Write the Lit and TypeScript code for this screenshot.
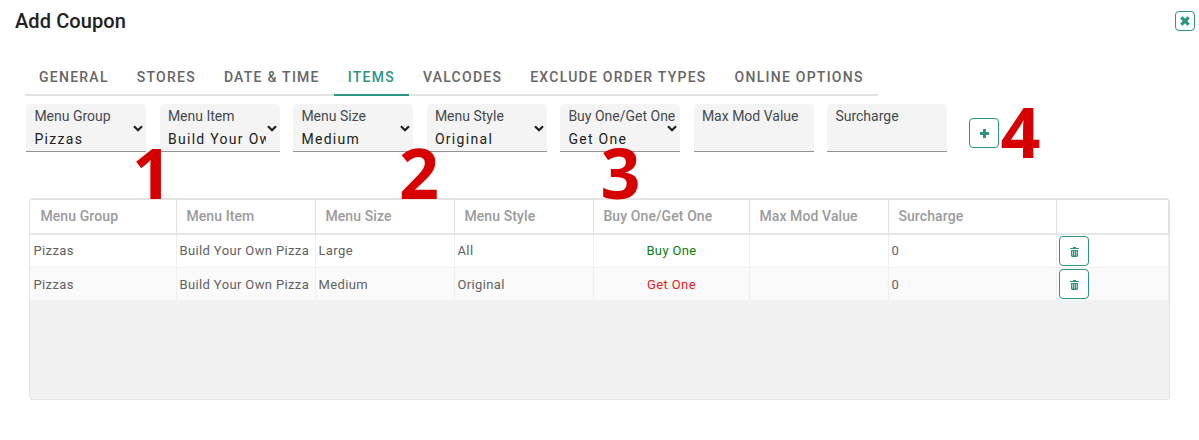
import { LitElement, html, css } from 'lit';
import { customElement, property } from 'lit/decorators.js';
import { classMap } from 'lit/directives/class-map.js';

const TABS = ['General', 'Stores', 'Date & Time', 'Items', 'Valcodes', 'Exclude Order Types', 'Online Options'];

const FIELDS = [
    { label: 'Menu Group', value: 'Pizzas', select: true },
    { label: 'Menu Item', value: 'Build Your Own Pizza', select: true },
    { label: 'Menu Size', value: 'Medium', select: true },
    { label: 'Menu Style', value: 'Original', select: true },
    { label: 'Buy One/Get One', value: 'Get One', select: true },
    { label: 'Max Mod Value', value: '', select: false },
    { label: 'Surcharge', value: '', select: false },
];

const ROWS = [
    { group: 'Pizzas', item: 'Build Your Own Pizza', size: 'Large', style: 'All', type: 'Buy One', mod: '', surcharge: '0' },
    { group: 'Pizzas', item: 'Build Your Own Pizza', size: 'Medium', style: 'Original', type: 'Get One', mod: '', surcharge: '0' },
];

@customElement('icon-button')
export class IconButton extends LitElement {
    @property() icon = 'plus';

    static styles = css`
    :host { display: block; width: 30px; height: 30px; }
    button {
      display: flex;
      align-items: center;
      justify-content: center;
      width: 100%;
      height: 100%;
      padding: 0;
      box-sizing: border-box;
      border: 1px solid #2d9482;
      border-radius: 4px;
      background: #fff;
      color: #2d9482;
    }
    svg { display: block; fill: currentColor; }
    .plus { margin-left: 1px; }
    .trash { margin: 2px 0 0 1px; }
  `;

    render() {
        return html`<button aria-label=${this.icon}>${this.renderIcon()}</button>`;
    }

    renderIcon() {
        if (this.icon === 'close') {
            return html`<svg width="10" height="10" viewBox="0 0 10 10"><path d="M2.4 .5 5 3.1 7.6 .5 9.5 2.4 6.9 5 9.5 7.6 7.6 9.5 5 6.9 2.4 9.5 .5 7.6 3.1 5 .5 2.4z" stroke="currentColor" stroke-width=".6" stroke-linejoin="round"/></svg>`;
        }
        if (this.icon === 'trash') {
            return html`<svg class="trash" width="9" height="10" viewBox="0 0 9 10"><path fill-rule="evenodd" d="M3 0h3v1h3v1H0V1h3zM1 3h7v6L7 10H2L1 9zM2.4 4v4.6h.6V4zM4.2 4v4.6h.6V4zM6 4v4.6h.6V4z"/></svg>`;
        }
        return html`<svg class="plus" width="9" height="9" viewBox="0 0 9 9"><path d="M3 0h3v3h3v3H6v3H3V6H0V3h3z"/></svg>`;
    }
}

@customElement('form-field')
export class FormField extends LitElement {
    @property() label = '';
    @property() value = '';
    @property({ type: Boolean }) select = false;

    static styles = css`
    :host {
      display: flex;
      align-items: center;
      box-sizing: border-box;
      position: relative;
      width: 120px;
      height: 48px;
      padding: 0 13.6px 0 8.4px;
      background: #f4f4f4;
      border-bottom: 1px solid #939393;
      border-radius: 4px 4px 0 0;
    }
    .text { flex: 1; min-width: 0; height: 47px; }
    .label {
      padding-top: 4px;
      font-size: 14px;
      line-height: 16px;
      color: #444a50;
      white-space: nowrap;
    }
    .value {
      padding-top: 6px;
      font-size: 14px;
      line-height: 18px;
      letter-spacing: 1.3px;
      color: #212121;
      white-space: nowrap;
      overflow: hidden;
    }
    /* sits over the end of long labels */
    .arrow { position: absolute; right: 3px; top: 21px; fill: none; stroke: #212121; stroke-width: 2.2; }
  `;

    render() {
        return html`
      <div class="text">
        <div class="label">${this.label}</div>
        <div class="value">${this.value}</div>
      </div>
      ${this.select
                ? html`<svg class="arrow" width="10" height="7" viewBox="0 0 10 7"><path d="M1 1.2 5 5.2 9 1.2"/></svg>`
                : ''}
    `;
    }
}

@customElement('items-table')
export class ItemsTable extends LitElement {
    static styles = css`
    :host {
      display: block;
      box-sizing: border-box;
      height: 202px;
      border: 1px solid #e3e3e3;
      border-top-width: 2px;
      border-radius: 4px;
      background: #f1f1f1;
      overflow: hidden;
    }
    .row {
      display: grid;
      grid-template-columns: 147px 139px 139px 139px 156px 139px 168px 1fr;
      height: 33px;
      background: #fff;
      font-size: 13px;
      letter-spacing: 0.37px;
      color: #616161;
    }
    .row > div {
      display: flex;
      align-items: center;
      padding: 0 2.5px;
      border-right: 1px solid #eee;
      white-space: nowrap;
    }
    .row > div:first-child { padding-left: 3.5px; }
    .row + .row { border-top: 1px solid #eee; }
    .row.alt { background: #fafafa; height: 32px; }
    .row.head {
      height: 33px;
      border-bottom: 2px solid #e6e6e6;
      font-size: 14px;
      font-weight: 500;
      letter-spacing: 0.1px;
      color: #9b9b9b;
    }
    .row.head > div { padding: 0 9.4px 1px; border-color: #e0e0e0; }
    .row.head > div:first-child { padding-left: 10.4px; }
    .row.head + .row { border-top: none; height: 32px; }
    .row.head + .row > div { padding-bottom: 2px; }
    .row.head + .row > .action { padding-bottom: 0; }
    .row > .type { justify-content: center; color: #0a7d0a; }
    .row > .type.get { color: #f01818; }
    .row > .action { padding-left: 2px; }
  `;

    render() {
        return html`
      <div class="row head">
        ${FIELDS.map((f) => html`<div>${f.label}</div>`)}
        <div></div>
      </div>
      ${ROWS.map((r, i) => html`
        <div class="row ${classMap({ alt: i % 2 === 1 })}">
          <div>${r.group}</div>
          <div>${r.item}</div>
          <div>${r.size}</div>
          <div>${r.style}</div>
          <div class="type ${classMap({ get: r.type === 'Get One' })}">${r.type}</div>
          <div>${r.mod}</div>
          <div>${r.surcharge}</div>
          <div class="action"><icon-button icon="trash"></icon-button></div>
        </div>
      `)}
    `;
    }
}

@customElement('app-root')
export class AppRoot extends LitElement {
    @property() active = 'Items';

    static styles = css`
    :host {
      display: block;
      position: relative;
      height: 440px;
      background: #fff;
      font-family: Roboto, sans-serif;
      overflow: hidden;
    }
    header {
      display: flex;
      justify-content: space-between;
      padding: 9px 4px 0 15px;
      height: 54px;
      box-sizing: border-box;
    }
    h1 {
      margin: 0;
      font-size: 20px;
      font-weight: 500;
      line-height: 24px;
      letter-spacing: 0.1px;
      color: #212121;
    }
    header icon-button { width: 20px; height: 20px; margin-top: 2px; }
    nav { display: flex; width: max-content; margin: 4px 0 0 25px; }
    .tab {
      height: 36px;
      padding: 0 14px;
      border-bottom: 2px solid #e3e3e3;
      font-size: 14px;
      font-weight: 500;
      line-height: 38px;
      letter-spacing: 1.25px;
      text-transform: uppercase;
      white-space: nowrap;
      color: #666;
    }
    .tab.active { color: #2d9482; border-color: #2d9482; }
    .fields { display: flex; gap: 13.5px; padding: 8px 0 0 26px; }
    .fields icon-button { margin: 14px 0 0 8px; }
    items-table { margin: 46px 29px 0; }
    /* numbered callouts laid over the form */
    .mark {
      position: absolute;
      font: bold 70px/70px "Open Sans", sans-serif;
      color: #d60000;
    }
    .m1 { left: 132px; top: 137px; }
    .m2 { left: 399px; top: 137px; }
    .m3 { left: 600.5px; top: 137px; }
    .m4 { left: 1000.5px; top: 96px; }
  `;

    render() {
        return html`
      <header>
        <h1>Add Coupon</h1>
        <icon-button icon="close"></icon-button>
      </header>
      <nav>
        ${TABS.map((t) => html`<div class="tab ${classMap({ active: t === this.active })}">${t}</div>`)}
      </nav>
      <div class="fields">
        ${FIELDS.map((f) => html`
          <form-field .label=${f.label} .value=${f.value} .select=${f.select}></form-field>
        `)}
        <icon-button icon="plus"></icon-button>
      </div>
      <items-table></items-table>
      ${[1, 2, 3, 4].map((n) => html`<div class="mark m${n}">${n}</div>`)}
    `;
    }
}
